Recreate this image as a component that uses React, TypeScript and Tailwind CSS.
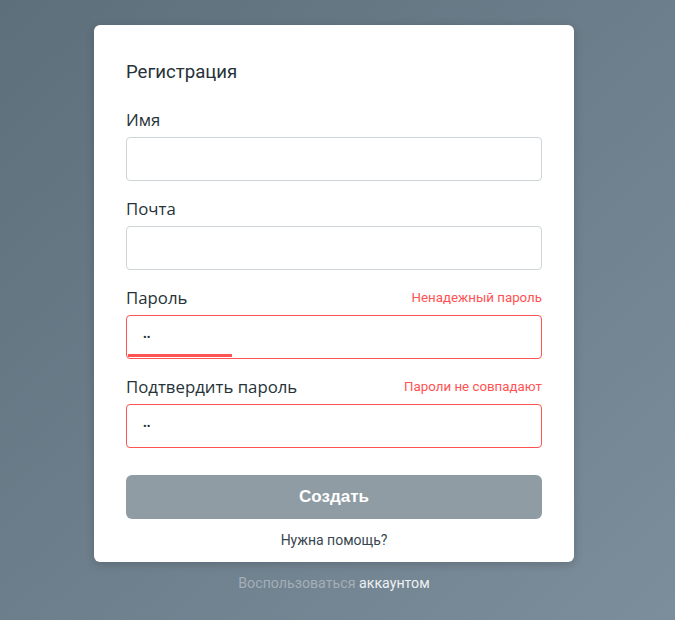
import React from "react";

function Field({
  label,
  error,
  password,
  strength,
}: {
  label: string;
  error?: string;
  password?: boolean;
  strength?: boolean;
}) {
  return (
    <div className="flex flex-col">
      <div className="flex items-center justify-between h-[22px] mb-[6px]">
        <span className="text-[16.8px] leading-[22px] text-[#263238]" style={{ fontFamily: '"Open Sans", sans-serif' }}>
          {label}
        </span>
        {error && (
          <span className="text-[13.3px] text-[#ff5252]" style={{ fontFamily: 'Roboto, sans-serif' }}>
            {error}
          </span>
        )}
      </div>
      <div className="relative">
        <input
          type={password ? "password" : "text"}
          readOnly
          defaultValue={password ? "12" : ""}
          className={`block w-full h-[44px] rounded-[4px] border bg-white px-[16px] text-[11px] text-[#263238] outline-none ${
            error ? "border-[#ff5252]" : "border-[#cfd4d8]"
          }`}
        />
        {strength && (
          <div className="absolute left-[2px] bottom-[2px] h-[3px] w-[104px] bg-[#ff5252]" />
        )}
      </div>
    </div>
  );
}

export default function App() {
  return (
    <div
      className="min-h-[620px] w-full flex flex-col items-center bg-gradient-to-br from-[#5e6f7c] to-[#7c8d9b] pt-[25px] pr-[7px]"
      style={{ fontFamily: 'Roboto, sans-serif' }}
    >
      <div className="w-[480px] bg-white rounded-[6px] shadow-[0_2px_10px_rgba(0,0,0,0.18)] px-[32px] pt-[33px] pb-[12px] flex flex-col">
        <h1 className="text-[18.6px] leading-[28px] text-[#263238] mb-[23px]" style={{ fontFamily: 'Roboto, sans-serif' }}>
          Регистрация
        </h1>
        <div className="flex flex-col gap-[17px]">
          <Field label="Имя" />
          <Field label="Почта" />
          <Field label="Пароль" error="Ненадежный пароль" password strength />
          <Field label="Подтвердить пароль" error="Пароли не совпадают" password />
        </div>
        <button
          className="mt-[27px] h-[44px] w-full rounded-[6px] bg-[#8f9ca3] text-white text-[17px] font-bold"
          style={{ fontFamily: '"Liberation Sans", Arial, sans-serif' }}
        >
          Создать
        </button>
        <div className="mt-[11px] text-center text-[14px] leading-[20px] text-[#37474f]">Нужна помощь?</div>
      </div>
      <div className="mt-[11px] text-[14.2px] leading-[20px] text-center">
        <span className="text-[#a3afb8]">Воспользоваться </span>
        <span className="text-[#eef1f3]">аккаунтом</span>
      </div>
    </div>
  );
}
